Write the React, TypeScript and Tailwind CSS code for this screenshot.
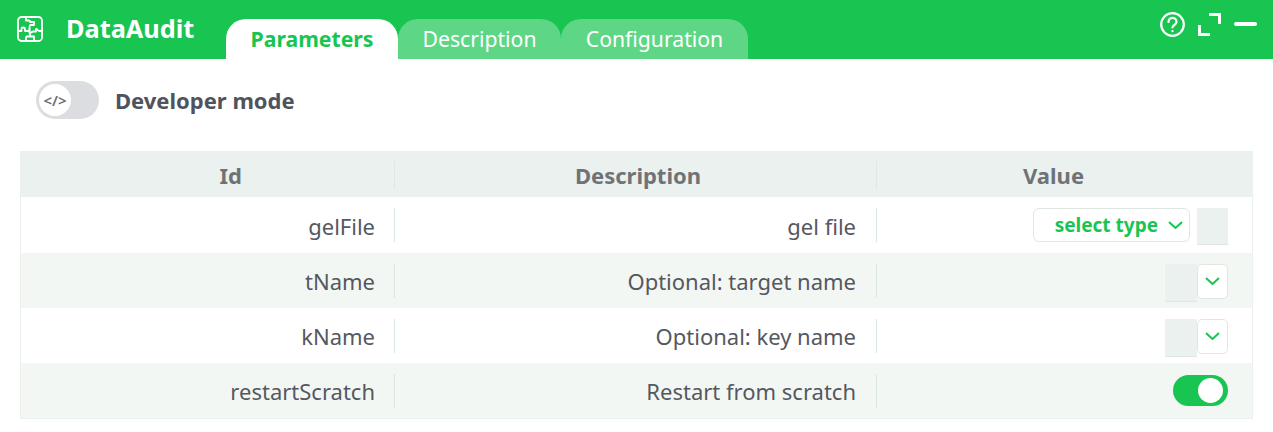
const font = { fontFamily: '"Noto Sans", sans-serif' };

const rows = [
  { id: "tName", desc: "Optional: target name", bg: "bg-[#f3f7f4]" },
  { id: "kName", desc: "Optional: key name", bg: "bg-white" },
];

function PuzzleIcon() {
  return (
    <svg width="26" height="26" viewBox="0 0 26 26" fill="none" stroke="white" strokeWidth="1.800" strokeLinecap="round" strokeLinejoin="round">
      <rect x="1" y="1" width="24" height="24" rx="3.500" />
      <path d="M9 1v3.500h3c1 0 1 1.500 1 1.500s3 0 4 0v3h-3.500c-1 0-1 3-1 4.500" />
      <path d="M1 15h3.500v-2c0-2 3.500-2 3.500 0v2h4.500" />
      <path d="M12.500 13v4c2 0 2-1.500 4-1.500h2.500v-2.500c2 0 2 2 3 2h3" />
      <path d="M13 18.500v2h-3c-1 0-1 2-1 2v2.500M13 20.500h4v4.500" />
    </svg>
  );
}

function Chevron({ w }: { w: number }) {
  return (
    <svg width={w} height="8" viewBox={`0 0 ${w} 8`} fill="none" stroke="#18c551" strokeWidth="2">
      <path d={`M1 1L${w / 2} 7L${w - 1} 1`} />
    </svg>
  );
}

function Cell({ children, last, pr }: { children: React.ReactNode; last?: boolean; pr?: string }) {
  return (
    <div className={`flex h-[34px] justify-end ${last ? "items-start pr-[24px]" : `items-center border-r border-[#d9e6e1] ${pr}`}`}>
      {last ? children : <span className="pt-[2px]">{children}</span>}
    </div>
  );
}

function Row({ id, desc, bg, h, children }: { id: string; desc: string; bg: string; h: string; children: React.ReactNode }) {
  return (
    <div className={`flex items-center text-[22px] text-[#55585f] ${bg} ${h}`}>
      <div className="w-[374px]"><Cell pr="pr-[19px]">{id}</Cell></div>
      <div className="w-[482px]"><Cell pr="pr-[20px]">{desc}</Cell></div>
      <div className="flex-1"><Cell last>{children}</Cell></div>
    </div>
  );
}

function SmallSelect() {
  return (
    <div className="flex items-start">
      <div className="h-[38px] w-[32px] border-b border-[#dfe7e3] bg-[#ebf1ee]" />
      <div className="flex h-[35px] w-[31px] items-center justify-center rounded-[5px] border border-[#dfe7e3] bg-white">
        <Chevron w={15} />
      </div>
    </div>
  );
}

export default function App() {
  return (
    <div className="h-[432px] w-[1273px] overflow-hidden bg-white" style={font}>
      <header className="relative flex h-[59px] items-end bg-[#18c551] pl-[17px]">
        <div className="flex h-[59px] w-[209px] items-center pb-[1px] text-white">
          <PuzzleIcon />
          <span className="ml-[23px] text-[25.300px] font-bold">DataAudit</span>
        </div>
        <div className="flex h-[40px] items-stretch text-[21.200px]">
          <div className="flex w-[172px] items-center justify-center rounded-t-[20px] bg-white font-bold text-[#18c551]">Parameters</div>
          <div className="flex w-[163px] items-center justify-center rounded-t-[20px] bg-[#5dd785] text-white">Description</div>
          <div className="flex w-[187px] items-center justify-center rounded-t-[20px] bg-[#5dd785] text-white">Configuration</div>
        </div>
        <div className="absolute right-[16px] top-[12px] flex items-start gap-[13px]">
          <svg width="25" height="25" viewBox="0 0 25 25" fill="none" stroke="white" strokeWidth="2.200" strokeLinecap="round">
            <circle cx="12.500" cy="12.500" r="11.300" />
            <path d="M8.500 10c0-5.500 8-5.500 8 0 0 3-4 3-4 5.500" />
            <path d="M12.500 19v.2" />
          </svg>
          <svg width="23" height="23" viewBox="0 0 23 23" fill="none" stroke="white" strokeWidth="3" className="mt-[1px]">
            <path d="M11 1.500h10.500V11" />
            <path d="M1.500 12v9.500H12" />
          </svg>
          <div className="mt-[10px] h-[4px] w-[23px] rounded-full bg-white" />
        </div>
      </header>

      <div className="flex h-[92px] items-start pl-[36px] pt-[22px]">
        <div className="flex h-[38px] w-[63px] items-center rounded-full bg-[#dcdde0] pl-[3px]">
          <div className="flex h-[32px] w-[32px] items-center justify-center rounded-full bg-white text-[15px] font-semibold text-[#6b6e75]">&lt;/&gt;</div>
        </div>
        <span className="ml-[16px] mt-[5px] text-[22px] font-bold leading-[28px] text-[#50535b]">Developer mode</span>
      </div>

      <div className="mx-[20px] h-[268px] border-r border-b border-l border-[#ebf1ee]">
        <div className="flex h-[46px] items-center bg-[#ebf1ee] text-[22px] font-bold text-[#6f7378]">
          <div className="mt-[2px] flex h-[28px] w-[374px] items-center justify-end border-r border-[#dfe8e4] pr-[152px]">Id</div>
          <div className="mt-[2px] flex h-[28px] w-[482px] items-center justify-center border-r border-[#dfe8e4] pl-[5px]">Description</div>
          <div className="mt-[2px] ml-[146px] flex items-center">Value</div>
        </div>
        <Row id="gelFile" desc="gel file" bg="bg-white" h="h-[56px]">
          <div className="flex items-start gap-[7px]">
            <div className="flex h-[34px] w-[157px] items-center justify-end gap-[10px] rounded-[6px] border border-[#dfe7e3] bg-white pr-[6px] text-[19px] font-bold text-[#18c551]">
              select type
              <Chevron w={15} />
            </div>
            <div className="h-[37px] w-[31px] border-b border-[#dfe7e3] bg-[#ebf1ee]" />
          </div>
        </Row>
        {rows.map((r) => (
          <Row key={r.id} id={r.id} desc={r.desc} bg={r.bg} h="h-[55px]">
            <SmallSelect />
          </Row>
        ))}
        <Row id="restartScratch" desc="Restart from scratch" bg="bg-[#f3f7f4]" h="h-[55px]">
          <div className="mt-[1px] flex h-[31px] w-[55px] items-center justify-end rounded-full bg-[#18c551] pr-[5px]">
            <div className="h-[25px] w-[25px] rounded-full bg-white" />
          </div>
        </Row>
      </div>
    </div>
  );
}
